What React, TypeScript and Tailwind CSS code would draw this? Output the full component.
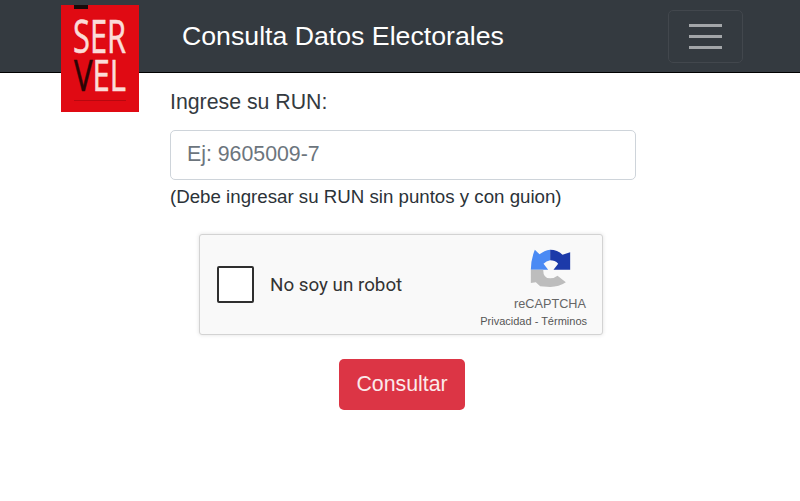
export default function App() {
  return (
    <div className="relative h-[501px] w-[800px] overflow-hidden bg-white font-['Liberation_Sans',Arial,sans-serif] text-[#343a40]">
      <header className="flex h-[73px] items-center border-b border-black bg-[#343a40] pl-[182px] pr-[57px]">
        <h1 className="flex-1 text-[26.7px] font-normal text-white">Consulta Datos Electorales</h1>
        <button className="flex h-[53px] w-[75px] flex-col items-center justify-center gap-[8px] rounded-[5px] border border-[#42474d]">
          <span className="h-[3px] w-[33px] bg-[#a3a6a9]" />
          <span className="h-[3px] w-[33px] bg-[#a3a6a9]" />
          <span className="h-[3px] w-[33px] bg-[#a3a6a9]" />
        </button>
      </header>

      <svg className="absolute left-[61px] top-[5px]" width="78" height="107" viewBox="0 0 78 107">
        <rect width="78" height="107" fill="#e00a13" />
        <rect x="13" y="0" width="14" height="4" fill="#1a0a0a" />
        <text x="12" y="48" fontSize="45" fill="#fbdcd8" stroke="#fbdcd8" strokeWidth="0.6" textLength="53" lengthAdjust="spacingAndGlyphs" fontFamily="Open Sans, sans-serif">SER</text>
        <text x="13" y="86" fontSize="43" fill="#fbdcd8" stroke="#fbdcd8" strokeWidth="0.6" textLength="52" lengthAdjust="spacingAndGlyphs" fontFamily="Open Sans, sans-serif">
          <tspan fill="#2a0505" stroke="#2a0505">V</tspan>EL
        </text>
        <rect x="13" y="95" width="52" height="1" fill="#b8070f" />
      </svg>

      <main className="ml-[170px] w-[466px]">
        <label className="mt-[17px] block text-[21.3px] leading-[24px]">Ingrese su RUN:</label>
        <input
          placeholder="Ej: 9605009-7"
          className="mt-[16px] block h-[50px] w-full rounded-[5px] border border-[#ced4da] bg-white px-[16px] pb-[2px] text-[21.3px] outline-none placeholder:text-[#6c757d]"
        />
        <p className="mt-[5px] text-[18.7px] leading-[24px] text-[#2b3238]">(Debe ingresar su RUN sin puntos y con guion)</p>

        <div className="ml-[29px] mt-[25px] flex h-[101px] w-[404px] items-center rounded-[3px] border border-[#d3d3d3] bg-[#f9f9f9] pl-[17px] pr-[15px] shadow-[0_0_4px_rgba(0,0,0,0.12)]">
          <div className="h-[37px] w-[37px] rounded-[2px] border-[2px] border-[#2f2f2f] bg-white" />
          <span className="ml-[16px] flex-1 pt-[2px] font-['Roboto',sans-serif] text-[18.8px] text-[#333]">No soy un robot</span>
          <div className="flex flex-col items-end self-stretch pt-[14px]">
            <svg className="mr-[16px]" width="41" height="38" viewBox="58 28 122 114">
              <path d="M72 30 L86 44 Q100 32 118 30 L118 62 Q106 64 98 72 L112 90 H60 Q60 60 72 30 Z" fill="#4a8af4" />
              <path d="M118 30 Q140 30 155 45 L178 38 V90 H128 L142 72 Q132 62 118 62 Z" fill="#1c3aa9" />
              <path d="M60 90 H97 Q97 116 118 116 Q130 116 140 108 L165 128 Q145 142 118 142 L88 140 L75 128 L60 130 Z" fill="#bdbdbd" />
            </svg>
            <span className="mr-[1px] mt-[10px] text-[12.7px] leading-[14px] text-[#666]">reCAPTCHA</span>
            <span className="mt-[4px] whitespace-nowrap text-[11px] leading-[13px] text-[#555]">Privacidad - Términos</span>
          </div>
        </div>

        <div className="mt-[24px] flex justify-center">
          <button className="-ml-[2px] h-[51px] w-[126px] rounded-[5px] bg-[#dc3545] text-[21.3px] text-[#fbe9ea]">Consultar</button>
        </div>
      </main>
    </div>
  );
}
